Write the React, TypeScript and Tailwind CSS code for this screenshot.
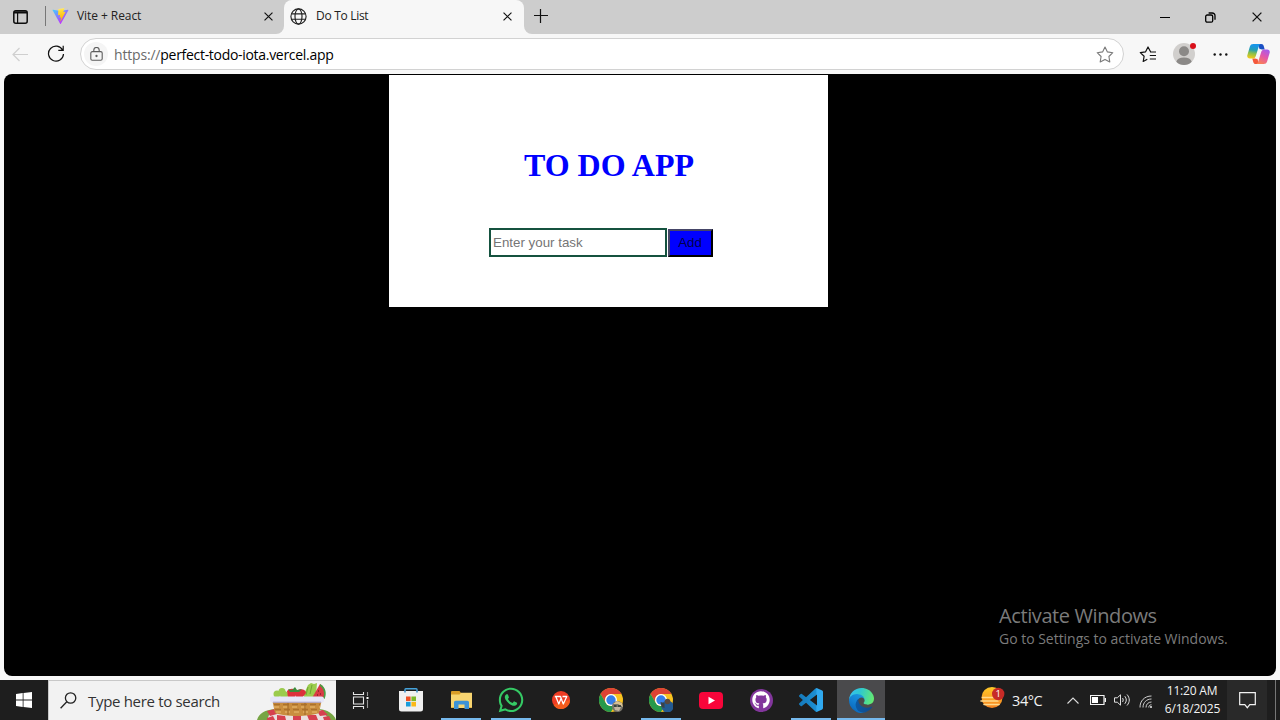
import type { ReactNode } from "react";
import { FaGithub, FaWhatsapp } from "react-icons/fa";

function Close({ size = 9 }: { size?: number }) {
  return (
    <svg width={size} height={size} viewBox="0 0 10 10" fill="none" stroke="#111" strokeWidth="1.3">
      <path d="M.6.6l8.8 8.8M9.4.6L.6 9.4" />
    </svg>
  );
}

function ViteLogo() {
  return (
    <svg width="17" height="16" viewBox="0 0 256 257">
      <defs>
        <linearGradient id="va" x1="0" y1="0" x2=".6" y2=".9">
          <stop stopColor="#41D1FF" />
          <stop offset="1" stopColor="#BD34FE" />
        </linearGradient>
        <linearGradient id="vb" x1=".4" y1="0" x2=".5" y2="1">
          <stop stopColor="#FFEA83" />
          <stop offset=".2" stopColor="#FFDD35" />
          <stop offset="1" stopColor="#FFA800" />
        </linearGradient>
      </defs>
      <path fill="url(#va)" d="M255 38L134 254c-2 5-9 5-12 0L1 38c-3-5 1-11 7-10l120 22 119-22c6-1 11 5 8 10z" />
      <path fill="url(#vb)" d="M185 0L97 17c-2 1-3 2-3 4l-6 92c0 2 2 4 5 4l25-6c2 0 4 2 4 4l-8 36c0 3 2 5 4 4l16-4c2-1 5 1 4 4l-12 56c-1 4 4 6 6 3l76-148c1-3-1-5-4-5l-25 5c-3 1-5-1-4-4L190 5c1-3-1-6-5-5z" />
    </svg>
  );
}

function Globe() {
  return (
    <svg width="17" height="17" viewBox="0 0 17 17" fill="none" stroke="#222" strokeWidth="1.15">
      <circle cx="8.5" cy="8.5" r="7.6" />
      <ellipse cx="8.5" cy="8.5" rx="3.5" ry="7.6" />
      <path d="M1.4 5.8h14.2M1.4 11.2h14.2" />
    </svg>
  );
}

function TabBar() {
  return (
    <div className="flex h-[34px] items-stretch bg-[#cdcdcd]">
      <div className="flex w-[45px] items-center pb-px pl-[13px]">
        <svg width="15" height="14" viewBox="0 0 15 14" fill="none" stroke="#0d0d0d">
          <rect x=".8" y=".8" width="13.4" height="12.4" rx="2" strokeWidth="1.5" />
          <path d="M1 2.4h13" strokeWidth="2.2" />
          <path d="M4.6 3v10" strokeWidth="1.2" />
        </svg>
      </div>
      <div className="flex w-[239px] items-center bg-[#f7f7f7]">
        <div className="flex h-full w-full items-center rounded-br-lg bg-[#cdcdcd] pb-[2px]">
          <div className="mr-[6px] h-5 w-px bg-[#777]" />
          <ViteLogo />
          <span className="ml-[8px] grow text-[12px] tracking-[-0.07px] text-[#222]">Vite + React</span>
          <span className="mr-[11px]"><Close /></span>
        </div>
      </div>
      <div className="flex w-[240px] bg-[#cdcdcd]">
        <div className="flex grow items-center rounded-t-lg bg-[#f7f7f7] pb-[2px] pl-[6px]">
          <Globe />
          <span className="ml-[9px] grow text-[12px] tracking-[-0.3px] text-[#222]">Do To List</span>
          <span className="mr-[12px]"><Close /></span>
        </div>
      </div>
      <div className="flex grow items-center bg-[#f7f7f7]">
        <div className="flex h-full grow items-center rounded-bl-lg bg-[#cdcdcd] pb-[2px] pl-[10px]">
          <svg width="14" height="14" viewBox="0 0 14 14" stroke="#111" strokeWidth="1.2">
            <path d="M0 6.5h14M6.5 0v14" />
          </svg>
          <div className="ml-auto flex items-center pr-[18px] pt-[2px]">
            <div className="mr-[35px] h-px w-[10px] bg-black" />
            <svg className="mr-[36px]" width="11" height="11" viewBox="0 0 11 11" fill="none" stroke="#000" strokeWidth="1.3">
              <rect x=".7" y="3" width="7" height="7.2" rx="1.5" />
              <path d="M3.6 1h3.6a2.8 2.8 0 0 1 2.8 2.8v4" />
            </svg>
            <Close size={10} />
          </div>
        </div>
      </div>
    </div>
  );
}

function Copilot() {
  return (
    <svg width="23" height="20" viewBox="0 0 23 20">
      <defs>
        <linearGradient id="ca" x1=".5" y1="0" x2=".35" y2="1">
          <stop offset=".1" stopColor="#1795e8" />
          <stop offset=".4" stopColor="#239fb4" />
          <stop offset=".65" stopColor="#8cc049" />
          <stop offset="1" stopColor="#f8ca18" />
        </linearGradient>
        <linearGradient id="cb" x1=".75" y1="0" x2=".25" y2="1">
          <stop stopColor="#a65bec" />
          <stop offset=".45" stopColor="#e256ae" />
          <stop offset="1" stopColor="#fb8250" />
        </linearGradient>
      </defs>
      <path fill="#1a4fc4" d="M11 0h3.200c1.500 0 2.200.8 2.600 2.300l.9 3.200h-5z" />
      <path fill="#f4583c" d="M12 20H8.800c-1.500 0-2.200-.8-2.600-2.300l-.9-3.200h5z" />
      <path fill="url(#ca)" d="M6.300 0h7.400c-1.200.4-1.700 1.600-2.100 3L8.800 12c-.5 1.700-1.400 2.600-3.100 2.600H2.800C.8 14.600-.2 13 .4 11L2.900 2.500C3.400.8 4.500 0 6.300 0z" />
      <path fill="url(#cb)" d="M16.700 20H9.300c1.200-.4 1.700-1.600 2.100-3l2.800-9c.5-1.700 1.400-2.600 3.100-2.600h2.900c2 0 3 1.600 2.400 3.600l-2.500 8.500c-.5 1.700-1.600 2.500-3.400 2.500z" />
      <path fill="#f7f7f7" d="M12 5.300h2.800c-1 .5-1.500 1.300-1.900 2.500L11 14.700H8.200c1-.5 1.500-1.300 1.900-2.500z" />
    </svg>
  );
}

function Toolbar() {
  return (
    <div className="flex h-10 items-center bg-[#f7f7f7]">
      <svg className="ml-[12px]" width="17" height="15" viewBox="0 0 17 15" fill="none" stroke="#cfcfcf" strokeWidth="1.2">
        <path d="M16 7.500H1M7.500 1L1 7.500 7.500 14" />
      </svg>
      <svg className="ml-[18px]" width="18" height="18" viewBox="0 0 18 18" fill="none" stroke="#111" strokeWidth="1.200">
        <path d="M15.700 5.200A7.500 7.500 0 1 0 16.500 9M11.300 5.300h4.900V.8" />
      </svg>
      <div className="ml-[15px] flex h-8 w-[1044px] items-center rounded-full border border-[#d2d2d2] bg-white">
        <div className="ml-[3px] flex size-6 items-center justify-center rounded-full bg-[#f5f5f5]">
          <svg width="13" height="14" viewBox="0 0 13 14" fill="none" stroke="#5d5d5d" strokeWidth="1.100">
            <rect x=".8" y="4.600" width="11.400" height="8.600" rx="1.500" />
            <path d="M3.800 4.500V3.200a2.700 2.700 0 0 1 5.400 0v1.300" />
            <circle cx="6.500" cy="9" r=".6" fill="#444" />
          </svg>
        </div>
        <span className="ml-[6px] grow text-[14px] tracking-[-0.300px] text-black">
          <span className="tracking-[-0.180px] text-[#6b6b6b]">https://</span>perfect-todo-iota.vercel.app
        </span>
        <svg className="mr-[9px]" width="18" height="17" viewBox="0 0 18 17" fill="none" stroke="#7a7a7a" strokeWidth="1.100" strokeLinejoin="round">
          <path d="M9 1l2.400 4.900 5.400.8-3.900 3.800.9 5.400L9 13.400l-4.800 2.500.9-5.400L1.200 6.700l5.400-.8z" />
        </svg>
      </div>
      <svg className="ml-[15px]" width="18" height="17" viewBox="0 0 18 17" fill="none" stroke="#111" strokeWidth="1.200" strokeLinejoin="round">
        <path d="M16 6h-4.300L9 1 6.600 5.800 1.300 6.600l3.800 3.700-.9 5.200L8.300 13.300M11 6H17M10.800 9.500H17M10.800 13H17" />
      </svg>
      <div className="relative ml-[16px] size-[22px]">
        <svg width="22" height="22" viewBox="0 0 22 22">
          <circle cx="11" cy="11" r="11" fill="#d1cfcd" />
          <circle cx="11" cy="8.200" r="5" fill="#8b8987" />
          <path d="M3.300 18.800c1-3 3.500-4.300 7.700-4.300s6.700 1.300 7.700 4.300A11 11 0 0 1 11 22a11 11 0 0 1-7.700-3.200z" fill="#8b8987" />
        </svg>
        <span className="absolute top-0 left-[17px] size-[6px] rounded-full bg-[#d9101b]" />
      </div>
      <svg className="ml-[18px]" width="15" height="3" viewBox="0 0 15 3" fill="#111">
        <circle cx="1.700" cy="1.500" r="1.200" />
        <circle cx="7.500" cy="1.500" r="1.200" />
        <circle cx="13.300" cy="1.500" r="1.200" />
      </svg>
      <div className="ml-[19px]"><Copilot /></div>
    </div>
  );
}

function TodoPage() {
  return (
    <div className="mx-1 flex h-[602px] flex-col rounded-lg bg-black">
      <div className="ml-[385px] mt-px flex h-[232px] w-[439px] flex-col bg-white">
        <h1 className="mt-[72px] pl-px text-center font-['Liberation_Serif',serif] text-[32px] leading-[37px] font-bold text-[#0000ff]">
          TO DO APP
        </h1>
        <div className="ml-[100px] mt-[44px] flex items-end gap-px font-['Liberation_Sans',sans-serif] text-[13.333px]">
          <input
            className="h-[29px] w-[178px] border-2 border-[#15523f] px-[2px] text-[13.333px] placeholder:text-[#757575]"
            placeholder="Enter your task"
          />
          <button className="h-[28px] w-[45px] border-2 border-t-[#454567] border-r-black border-b-black border-l-[#454567] bg-[#0000ff] pr-px text-[#00004c]">
            Add
          </button>
        </div>
      </div>
      <div className="ml-[995px] mt-[296px] flex flex-col text-[#7b7b7b]">
        <span className="text-[20px] leading-[26px] tracking-[-0.400px]">Activate Windows</span>
        <span className="text-[14px] leading-[20px] tracking-[-0.020px]">Go to Settings to activate Windows.</span>
      </div>
    </div>
  );
}

function Basket() {
  return (
    <svg width="79" height="38" viewBox="0 0 79 38">
      <path d="M0 38c2-7 8-10 18-11h44c9 1 15 5 17 11z" fill="#77a544" />
      <path d="M14 28h50l9 10H10z" fill="#e9e0e0" />
      <path d="M10 29l8-2 2 5-7 2zM20 33l8 1 1 4h-9zM36 34h8v4h-8zM50 33h9l2 5h-9zM60 29l6-1 5 5-8 1zM66 35l6-1 2 4h-7zM10 36l6-2 2 4h-8z" fill="#d6404f" />
      <path d="M15 17h50l-3 14c-10 4-34 4-44 0z" fill="#c98d3f" />
      <path d="M17 22.500h46M18 27.500h44" stroke="#ab712c" strokeWidth="1.500" strokeDasharray="6 3" />
      <path d="M17 25h46M19 30h42" stroke="#e0ad61" strokeWidth="1.500" strokeDasharray="5 4" />
      <path d="M31 19v14M48 19v14" stroke="#a96f2b" strokeWidth="1.300" />
      <g fill="#9bcb4d">
        <circle cx="20" cy="12" r="3.500" />
        <circle cx="25" cy="9.500" r="3.500" />
        <circle cx="27" cy="13" r="4" />
        <path d="M47 12l4-9 3-2 3 1 3-1-1 12-5 3h-7z" />
      </g>
      <path d="M51 5l-2 8M55 3l-2 9" stroke="#6ea832" />
      <path d="M30 9c4-4 9-2 10 1l-2 6h-7zM39 9c4-3 10-2 10 2l-4 5h-6z" fill="#dc303b" />
      <path d="M31 7l4 1 3-3 2 3 5-1-3 3h-9z" fill="#3c8c3b" />
      <path d="M55 16L63 2c5 3 6 9 4 15z" fill="#d93b45" />
      <path d="M63 2c6 3 7 10 4.500 15l-1.500-1c2-4 1-9-3-12z" fill="#4c9e43" />
      <path d="M61 9h1M63 12h1M60 13h1" stroke="#5b1520" />
      <rect x="13" y="14.500" width="54" height="6" rx="2.500" fill="#e6e6f8" />
      <path d="M16 20.200h48" stroke="#a8a1cc" />
    </svg>
  );
}

function TaskView() {
  return (
    <svg width="18" height="17" viewBox="0 0 18 17" fill="none" stroke="#e5e5e5" strokeWidth="1.100">
      <path d="M1.500 0v2.500h10V0M1.500 17v-2.500h10V17M1.500 5h10v7h-10z" />
      <path d="M15.500 0v4M15.500 8v8" stroke="#999" />
      <rect x="14.500" y="5" width="2" height="2" fill="#fff" stroke="none" />
    </svg>
  );
}

function Store() {
  return (
    <svg width="24" height="24" viewBox="0 0 24 24">
      <path d="M6 4V1.600c0-.5.300-.8.800-.8h10.400c.5 0 .8.300.8.800V4" fill="none" stroke="#46a4dc" strokeWidth="1.400" />
      <path d="M0 3h24v18a2.500 2.500 0 0 1-2.500 2.500h-19A2.500 2.500 0 0 1 0 21z" fill="#f0f0f0" />
      <path d="M6 4.500V3M18 4.500V3" stroke="#2a85c4" strokeWidth="1.400" />
      <path d="M7 8.500h4.600v4.600H7z" fill="#ef5125" />
      <path d="M12.400 8.500H17v4.600h-4.600z" fill="#7db928" />
      <path d="M7 13.900h4.600v4.600H7z" fill="#199ddb" />
      <path d="M12.400 13.900H17v4.600h-4.600z" fill="#fbb918" />
    </svg>
  );
}

function Folder() {
  return (
    <svg width="21" height="18" viewBox="0 0 21 18">
      <path d="M0 1.200C0 .5.500 0 1.200 0h7.300l1.500 2H21v15H0z" fill="#d99d28" />
      <path d="M0 3.500h8.500l1.500-1.700h11V17H0z" fill="#f8d571" />
      <path d="M3 11.500C3 10.500 3.700 9.800 4.700 9.800h11.600c1 0 1.700.7 1.700 1.700V18h-4.500v-4.500h-6V18H3z" fill="#3d93d6" />
      <path d="M0 16.500h3M18 16.500h3" stroke="#e3b549" />
    </svg>
  );
}

function Wps() {
  return (
    <svg width="18" height="18" viewBox="0 0 18 18">
      <circle cx="9" cy="9" r="9" fill="#ef3c23" />
      <path d="M1.500 14A9 9 0 0 0 18 9c-6 1-11 3-16.500 5z" fill="#f45b1d" />
      <path d="M2.800 5.500h5.700L10 9.500M4 6l2.800 7 2.300-5.700L11.300 13l3.500-7.500h-4.300" fill="none" stroke="#fff" strokeWidth="1.300" strokeLinejoin="round" />
    </svg>
  );
}

function Chrome({ children }: { children: ReactNode }) {
  return (
    <svg width="24" height="24" viewBox="0 0 24 24">
      <circle cx="12" cy="12" r="12" fill="#f9c420" />
      <path d="M1.600 6A12 12 0 0 1 22.400 6H12a6 6 0 0 0-5.200 9z" fill="#dd4334" />
      <path d="M1.600 6A12 12 0 0 0 12 24l5.200-9A6 6 0 0 1 6.800 15z" fill="#26994c" />
      <circle cx="12" cy="12" r="6" fill="#fff" />
      <circle cx="12" cy="12" r="4.700" fill="#367fe9" />
      {children}
    </svg>
  );
}

function Code() {
  return (
    <svg width="24" height="24" viewBox="0 0 24 24">
      <defs>
        <linearGradient id="vs" x1="0" y1="0" x2="1" y2="0">
          <stop stopColor="#1579ba" />
          <stop offset=".7" stopColor="#1c8fd3" />
          <stop offset=".75" stopColor="#30a9ef" />
        </linearGradient>
      </defs>
      <path fill="url(#vs)" d="M23.150 2.587L18.210.21a1.494 1.494 0 0 0-1.705.29l-9.460 8.630-4.120-3.128a.999.999 0 0 0-1.276.057L.327 7.261A1 1 0 0 0 .326 8.740L3.899 12 .326 15.260a1 1 0 0 0 .001 1.479L1.650 17.940a.999.999 0 0 0 1.276.057l4.120-3.128 9.460 8.630a1.492 1.492 0 0 0 1.704.290l4.942-2.377A1.500 1.500 0 0 0 24 20.060V3.939a1.500 1.500 0 0 0-.850-1.352zm-5.146 14.861L10.826 12l7.178-5.448v10.896z" />
    </svg>
  );
}

function Edge() {
  return (
    <svg width="25" height="25" viewBox="0 0 256 256">
      <defs>
        <linearGradient id="ea" x1="0" y1=".5" x2="1" y2=".5">
          <stop stopColor="#0c59a4" />
          <stop offset="1" stopColor="#114a8b" />
        </linearGradient>
        <linearGradient id="eb" x1=".8" y1="0" x2=".3" y2="1">
          <stop stopColor="#1b9de2" />
          <stop offset=".5" stopColor="#1482d4" />
          <stop offset="1" stopColor="#0a65b8" />
        </linearGradient>
        <linearGradient id="ec" x1="0" y1=".4" x2="1" y2=".6">
          <stop stopColor="#35c1f1" />
          <stop offset=".4" stopColor="#2fc8cf" />
          <stop offset="1" stopColor="#66eb6e" />
        </linearGradient>
      </defs>
      <path fill="url(#ea)" d="M231 190.500c-3.400 1.800-6.900 3.400-10.500 4.700a101.500 101.500 0 0 1-35.800 6.500c-47.200 0-88.300-32.500-88.300-74.100 0-11.400 6.400-21.900 16.400-27.300-42.800 1.800-53.700 46.300-53.700 72.400 0 73.900 68 81.300 82.700 81.300 7.900 0 19.800-2.300 27-4.600l1.300-.4a128.300 128.300 0 0 0 66.600-52.800 4 4 0 0 0-5.700-5.700z" />
      <path fill="url(#eb)" d="M105.700 241.500a79.200 79.200 0 0 1-22.700-21.400 80.700 80.700 0 0 1 29.500-120c3.100-1.500 8.500-4.200 15.600-4a32.400 32.400 0 0 1 25.700 13 31.900 31.900 0 0 1 6.300 18.700c0-.2 24.500-79.600-80-79.600-43.900 0-80 41.700-80 78.200 0 19.400 4.200 38.800 12.100 56a128 128 0 0 0 156.400 67.100 75.500 75.500 0 0 1-62.800-8z" />
      <path fill="url(#ec)" d="M152.300 148.900c-.9 1.100-3.400 2.500-3.400 5.700 0 2.600 1.700 5.100 4.700 7.200 14.400 10 41.500 8.700 41.600 8.700 10.700 0 21.100-2.900 30.300-8.300a61.400 61.400 0 0 0 30.400-52.900c.3-22.400-8-37.300-11.300-43.900C223.500 23.900 177.700 0 128 0A128 128 0 0 0 0 126.200c.5-36.500 36.800-66 80-66 3.500 0 23.500.3 42 10.100 16.300 8.600 24.900 18.900 30.800 29.200 6.200 10.700 7.300 24.100 7.300 29.500 0 5.300-2.700 13.300-7.800 19.900z" />
    </svg>
  );
}

function TaskButton({ children, open, active }: { children: ReactNode; open?: boolean; active?: boolean }) {
  return (
    <div className="flex w-[50px] flex-col items-center">
      <div className={active ? "flex h-[38px] w-[48px] items-center justify-center bg-[#4a4a4c] pt-[2px]" : "flex h-[38px] items-center justify-center pt-[2px]"}>
        {children}
      </div>
      {open && <div className={active ? "h-[2px] w-[48px] bg-[#76b9ed]" : "h-[2px] w-[40px] bg-[#76b9ed]"} />}
    </div>
  );
}

function Weather() {
  return (
    <svg width="25" height="23" viewBox="0 0 25 23">
      <defs>
        <linearGradient id="sun" x1="0" y1="0" x2="0" y2="1">
          <stop stopColor="#ffc928" />
          <stop offset="1" stopColor="#f58220" />
        </linearGradient>
      </defs>
      <circle cx="12" cy="10.500" r="10.500" fill="url(#sun)" />
      <path d="M2.500 10.500h13M1 14h17M4 17.500h15" stroke="#ffd98a" strokeWidth="1.600" strokeLinecap="round" />
      <circle cx="18.200" cy="7" r="6.200" fill="#c72b27" />
      <text x="18.200" y="10.300" fontSize="9.500" textAnchor="middle" fill="#fff">1</text>
    </svg>
  );
}

function Taskbar() {
  return (
    <div className="flex h-10 bg-[#1e1e1e]">
      <div className="flex w-12 items-center justify-center">
        <svg width="16" height="16" viewBox="0 0 16 16" fill="#fff">
          <path d="M0 2l6.700-1v6.600H0zM7.500.9L16 0v7.600H7.500zM0 8.400h6.700V15L0 14zM7.500 8.400H16V16l-8.500-1.100z" />
        </svg>
      </div>
      <div className="flex w-[288px] items-center border-t border-l border-[#c8c8c8] bg-[#f2f2f2]">
        <svg className="ml-[11px]" width="17" height="17" viewBox="0 0 17 17" fill="none" stroke="#222" strokeWidth="1.300">
          <circle cx="10.600" cy="6" r="5.200" />
          <path d="M6.800 9.800L.6 16.300" />
        </svg>
        <span className="ml-[11px] grow pt-px text-[15px] tracking-[-0.320px] whitespace-nowrap text-[#333]">Type here to search</span>
        <Basket />
      </div>
      <TaskButton><TaskView /></TaskButton>
      <TaskButton><Store /></TaskButton>
      <TaskButton open><Folder /></TaskButton>
      <TaskButton open><FaWhatsapp size={28} color="#35ca65" /></TaskButton>
      <TaskButton><Wps /></TaskButton>
      <TaskButton>
        <Chrome>
          <circle cx="18.500" cy="18.500" r="5.500" fill="#77746b" />
          <path d="M14 16l4-3 5 2 1 4-5-3z" fill="#d8c193" />
          <path d="M15 19h7l-2 4-4-1z" fill="#c4b6a0" />
          <path d="M15 18h2.500M19 18h3" stroke="#29352f" strokeWidth="1.500" />
        </Chrome>
      </TaskButton>
      <TaskButton open>
        <Chrome>
          <circle cx="18.500" cy="18.500" r="6" fill="#245a91" />
          <circle cx="18.500" cy="13.500" r="2.800" fill="#59483f" />
          <path d="M11.500 14l4 1v5l-3-1z" fill="#394249" />
        </Chrome>
      </TaskButton>
      <TaskButton>
        <svg width="24" height="17" viewBox="0 0 24 17">
          <rect width="24" height="17" rx="4" fill="#f8053a" />
          <path d="M9.500 4.800v7.400l6.500-3.700z" fill="#fff" />
        </svg>
      </TaskButton>
      <TaskButton>
        <div className="flex size-[23px] items-center justify-center rounded-full bg-[#82369c]">
          <FaGithub size={18} color="#fff" />
        </div>
      </TaskButton>
      <TaskButton open><Code /></TaskButton>
      <TaskButton open active><Edge /></TaskButton>
      <div className="ml-auto flex items-center text-[#f2f2f2]">
        <div className="pb-[4px]"><Weather /></div>
        <span className="ml-[7px] w-[44px] pt-[2px] text-[14.500px] tracking-[-0.400px]">34°C</span>
        <svg className="ml-[11px]" width="12" height="7" viewBox="0 0 12 7" fill="none" stroke="#ddd" strokeWidth="1.100">
          <path d="M.5 6.500L6 1l5.500 5.500" />
        </svg>
        <svg className="ml-[11px]" width="16" height="10" viewBox="0 0 16 10" fill="none" stroke="#f2f2f2">
          <path d="M.5.500h13.500v9H.5z" strokeWidth="1.200" />
          <path d="M15.300 3v4" strokeWidth="1.400" />
          <path d="M2 2h6v6H2z" fill="#fff" stroke="none" />
        </svg>
        <svg className="ml-[8px]" width="16" height="14" viewBox="0 0 16 14" fill="none" stroke="#e0e0e0" strokeWidth="1">
          <path d="M.5 4.800h2.800L6.500 1.800v10.400L3.300 9.200H.5zM8.500 5c.9 1.200.9 2.800 0 4M10.800 3.200c2 2.400 2 5.200 0 7.600M13 1.500c3 3.500 3 7.500 0 11" />
        </svg>
        <svg className="mt-[3px] ml-[9px]" width="14" height="13" viewBox="0 0 14 13" fill="none" stroke="#cfcfcf" strokeWidth="1">
          <path d="M1 12.500C.8 6 5.500 1 12.500 1M4 12.500C4 7.500 7.500 4 12.500 4M7 12.500C7 9.300 9.300 7 12.500 7M9.800 12.500c0-1.700 1-2.700 2.700-2.700" />
          <circle cx="12" cy="12" r="1" fill="#eee" stroke="none" />
        </svg>
        <div className="ml-[5px] flex w-[68px] flex-col items-center text-[12px] leading-[18px] whitespace-nowrap">
          <span className="tracking-[-0.200px]">11:20 AM</span>
          <span className="pl-px tracking-[-0.150px]">6/18/2025</span>
        </div>
        <div className="ml-[1px] flex h-full w-[40px] items-center justify-center bg-[#292929]">
          <svg width="17" height="17" viewBox="0 0 17 17" fill="none" stroke="#f2f2f2" strokeWidth="1.200">
            <path d="M.7.700h15.600v12h-5.500l-2.500 3-2.500-3H.7z" />
          </svg>
        </div>
        <div className="mr-1 ml-[8px] h-full w-px bg-[#777]" />
      </div>
    </div>
  );
}

export default function App() {
  return (
    <div className="flex h-[720px] w-[1280px] flex-col overflow-hidden bg-[#f7f7f7] font-['Open_Sans','Noto_Sans',sans-serif]">
      <TabBar />
      <Toolbar />
      <TodoPage />
      <div className="h-1 shrink-0 bg-[#f7f7f7]" />
      <Taskbar />
    </div>
  );
}
